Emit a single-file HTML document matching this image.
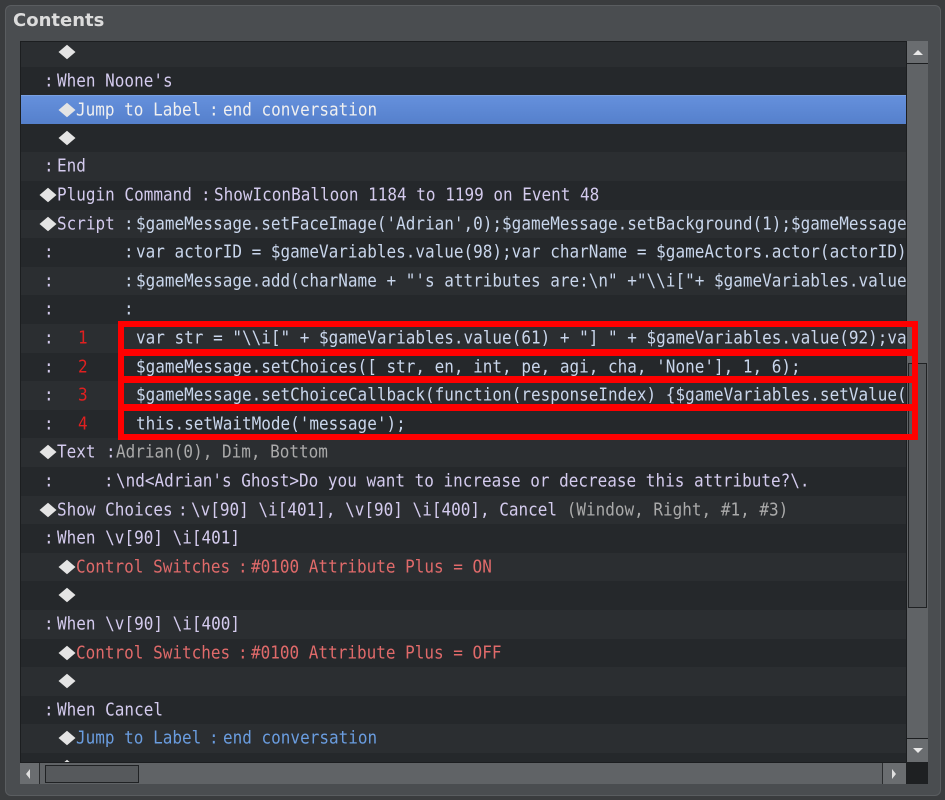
<!DOCTYPE html>
<html><head><meta charset="utf-8"><style>
*{margin:0;padding:0;box-sizing:border-box}
body{width:945px;height:800px;background:#3a3c3e;position:relative;overflow:hidden;font-family:"DejaVu Sans Mono","Liberation Mono",monospace}
#panel{position:absolute;left:5px;top:5px;width:936px;height:791px;background:#4a4d50;border-radius:6px;border:1px solid #5a5d60}
#title{position:absolute;left:13px;top:10px;font-family:"DejaVu Sans","Liberation Sans",sans-serif;font-weight:bold;font-size:18px;color:#dcdcdc}
#list{position:absolute;left:20px;top:41px;width:886px;height:721px;overflow:hidden;background:#26292c;border-left:1px solid #1c1e20;border-top:1px solid #1c1e20}
.r{position:absolute;left:0;width:886px;height:28.6px}
.r.a{background:#2b2e31}
.r.b{background:#25282b}
.r.sel{background:linear-gradient(#6590dc,#5580cc);border-top:1px solid #7aa0e0}
.r span{position:absolute;top:4px;white-space:pre;font-size:16px;line-height:20px;color:#d4cbee;transform:scaleY(1.12);transform-origin:left center}
.r i{position:absolute;top:8px;width:12px;height:12px;background:#e4e4e4;transform:scaleY(0.85) rotate(45deg)}
.c{color:#c9d6ec!important}
.g{color:#aaaaaa!important}
.red{color:#e06a6a!important}
.blu{color:#6a9de0!important}
.num{color:#e02020!important}
.w{color:#f0f0f0!important}
#vs{position:absolute;left:906px;top:41px;width:22px;height:721px;background:#606366;border-left:1px solid #1c1e20}
#box{position:absolute;left:118px;top:321px;width:800px;height:119px;border:6px solid #f00}
.bar{position:absolute;left:118px;width:800px;height:7px;background:#f00}
</style></head><body>
<div id="panel"></div>
<div id="title">Contents</div>
<div id="list">
<div class="r a" style="top:-4px"><i style="left:40px"></i></div>
<div class="r b" style="top:24.6px"><span style="left:23px">:</span><span style="left:36px">When Noone's</span></div>
<div class="r sel" style="top:53.2px"><i style="left:40px"></i><span class="w" style="left:55px">Jump to Label</span><span class="w" style="left:188px">:</span><span class="w" style="left:202px">end conversation</span></div>
<div class="r b" style="top:81.8px"><i style="left:40px"></i></div>
<div class="r a" style="top:110.4px"><span style="left:23px">:</span><span style="left:36px">End</span></div>
<div class="r b" style="top:139px"><i style="left:21px"></i><span style="left:36px">Plugin Command</span><span style="left:180px">:</span><span style="left:193px">ShowIconBalloon 1184 to 1199 on Event 48</span></div>
<div class="r a" style="top:167.6px"><i style="left:21px"></i><span style="left:36px">Script</span><span class="c" style="left:103px">:</span><span class="c" style="left:115px">$gameMessage.setFaceImage('Adrian',0);$gameMessage.setBackground(1);$gameMessage.setPositionType(2);</span></div>
<div class="r b" style="top:196.2px"><span style="left:23px">:</span><span class="c" style="left:103px">:</span><span class="c" style="left:115px">var actorID = $gameVariables.value(98);var charName = $gameActors.actor(actorID).name();</span></div>
<div class="r a" style="top:224.8px"><span style="left:23px">:</span><span class="c" style="left:103px">:</span><span class="c" style="left:115px">$gameMessage.add(charName + "'s attributes are:\n" +"\\i["+ $gameVariables.value(61)</span></div>
<div class="r b" style="top:253.4px"><span style="left:23px">:</span><span class="c" style="left:103px">:</span></div>
<div class="r a" style="top:282px"><span style="left:23px">:</span><span class="num" style="left:57px">1</span><span class="c" style="left:115px">var str = "\\i[" + $gameVariables.value(61) + "] " + $gameVariables.value(92);var en</span></div>
<div class="r b" style="top:310.6px"><span style="left:23px">:</span><span class="num" style="left:57px">2</span><span class="c" style="left:115px">$gameMessage.setChoices([ str, en, int, pe, agi, cha, 'None'], 1, 6);</span></div>
<div class="r a" style="top:339.2px"><span style="left:23px">:</span><span class="num" style="left:57px">3</span><span class="c" style="left:115px">$gameMessage.setChoiceCallback(function(responseIndex) {$gameVariables.setValue(</span></div>
<div class="r b" style="top:367.8px"><span style="left:23px">:</span><span class="num" style="left:57px">4</span><span class="c" style="left:115px">this.setWaitMode('message');</span></div>
<div class="r a" style="top:396.4px"><i style="left:21px"></i><span style="left:36px">Text</span><span style="left:85px">:</span><span class="g" style="left:95px">Adrian(0), Dim, Bottom</span></div>
<div class="r b" style="top:425px"><span style="left:23px">:</span><span style="left:83px">:</span><span style="left:95px">\nd&lt;Adrian's Ghost&gt;Do you want to increase or decrease this attribute?\.</span></div>
<div class="r a" style="top:453.6px"><i style="left:21px"></i><span style="left:36px">Show Choices</span><span style="left:157px">:</span><span style="left:170px">\v[90] \i[401], \v[90] \i[400], Cancel <span class="g" style="position:static">(Window, Right, #1, #3)</span></span></div>
<div class="r b" style="top:482.2px"><span style="left:23px">:</span><span style="left:36px">When \v[90] \i[401]</span></div>
<div class="r a" style="top:510.8px"><i style="left:40px"></i><span class="red" style="left:55px">Control Switches</span><span class="red" style="left:217px">:</span><span class="red" style="left:230px">#0100 Attribute Plus = ON</span></div>
<div class="r b" style="top:539.4px"><i style="left:40px"></i></div>
<div class="r a" style="top:568px"><span style="left:23px">:</span><span style="left:36px">When \v[90] \i[400]</span></div>
<div class="r b" style="top:596.6px"><i style="left:40px"></i><span class="red" style="left:55px">Control Switches</span><span class="red" style="left:217px">:</span><span class="red" style="left:230px">#0100 Attribute Plus = OFF</span></div>
<div class="r a" style="top:625.2px"><i style="left:40px"></i></div>
<div class="r b" style="top:653.8px"><span style="left:23px">:</span><span style="left:36px">When Cancel</span></div>
<div class="r a" style="top:682.4px"><i style="left:40px"></i><span class="blu" style="left:55px">Jump to Label</span><span class="blu" style="left:188px">:</span><span class="blu" style="left:202px">end conversation</span></div>
<div class="r b" style="top:711px"><i style="left:40px"></i></div>
</div>
<div id="vs">
 <div style="position:absolute;left:0;top:0;width:21px;height:23px;background:#6a6d70;border-bottom:1px solid #1c1e20"><div style="position:absolute;left:6px;top:9px;width:0;height:0;border-left:5px solid transparent;border-right:5px solid transparent;border-bottom:5px solid #e8e8e8"></div></div>
 <div style="position:absolute;left:1px;top:322px;width:19px;height:245px;background:#56595c;border:1px solid #202224"></div>
 <div style="position:absolute;left:0;top:697px;width:21px;height:24px;background:#6a6d70;border-top:1px solid #1c1e20"><div style="position:absolute;left:6px;top:9px;width:0;height:0;border-left:5px solid transparent;border-right:5px solid transparent;border-top:5px solid #e8e8e8"></div></div>
</div>
<div style="position:absolute;left:20px;top:762px;width:886px;height:22px;background:#606366;border-top:1px solid #1c1e20">
 <div style="position:absolute;left:0;top:0;width:20px;height:21px;border-right:1px solid #2a2c2e;background:#6a6d70"><div style="position:absolute;left:6px;top:6px;width:0;height:0;border-top:5px solid transparent;border-bottom:5px solid transparent;border-right:4px solid #e0e0e0"></div></div>
 <div style="position:absolute;left:25px;top:2px;width:94px;height:18px;background:#56595c;border:1px solid #202224"></div>
 <div style="position:absolute;left:862px;top:0;width:24px;height:21px;border-left:1px solid #2a2c2e;background:#6a6d70"><div style="position:absolute;left:9px;top:6px;width:0;height:0;border-top:5px solid transparent;border-bottom:5px solid transparent;border-left:4px solid #e0e0e0"></div></div>
</div>
<div style="position:absolute;left:906px;top:762px;width:22px;height:22px;background:#1e2022"></div>
<div id="box"></div>
<div class="bar" style="top:349px"></div>
<div class="bar" style="top:376px"></div>
<div class="bar" style="top:404px"></div>
</body></html>
